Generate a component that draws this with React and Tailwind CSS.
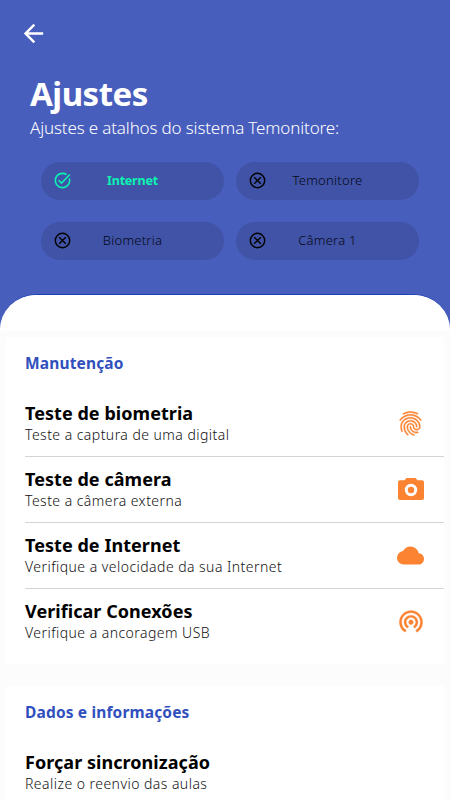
import { MdArrowBack, MdTaskAlt, MdFingerprint, MdCloud, MdWifiTethering } from "react-icons/md";

const devices = [
  { name: "Internet", online: true },
  { name: "Temonitore", online: false },
  { name: "Biometria", online: false },
  { name: "Câmera 1", online: false },
];

const maintenance = [
  {
    title: "Teste de biometria",
    text: "Teste a captura de uma digital",
    icon: <MdFingerprint size={29} className="[&>path]:stroke-current [&>path]:[stroke-width:0.35] [&>path[fill=none]]:hidden" />,
  },
  { title: "Teste de câmera", text: "Teste a câmera externa", icon: <CameraIcon /> },
  { title: "Teste de Internet", text: "Verifique a velocidade da sua Internet", icon: <MdCloud size={27} /> },
  {
    title: "Verificar Conexões",
    text: "Verifique a ancoragem USB",
    icon: <MdWifiTethering size={28} className="-mt-0.5 [&>path]:stroke-current [&>path]:[stroke-width:0.2] [&>path[fill=none]]:hidden" />,
  },
];

const data = [{ title: "Forçar sincronização", text: "Realize o reenvio das aulas" }];

function CameraIcon() {
  return (
    <svg className="-mt-px" width="26" height="22" viewBox="0 0 26 22" fill="currentColor">
      <path d="M8.5 0h9l2 2.2H24a2 2 0 0 1 2 2V20a2 2 0 0 1-2 2H2a2 2 0 0 1-2-2V4.2a2 2 0 0 1 2-2h4.500z" />
      <circle cx="13" cy="12" r="4.7" fill="none" stroke="white" strokeWidth="3" />
    </svg>
  );
}

function OfflineIcon() {
  return (
    <svg className="-mt-0.5 shrink-0 text-black" width="19" height="19" viewBox="0 0 19 19" fill="none" stroke="currentColor" strokeWidth="1.4">
      <circle cx="9.5" cy="9.5" r="7.2" />
      <path d="M6.2 6.2l6.6 6.6M12.8 6.2l-6.6 6.6" />
    </svg>
  );
}

function StatusPill({ name, online }) {
  return (
    <div className={`flex h-[38px] items-center rounded-full bg-[#4053a6] pl-3 ${online ? "text-[#0bf5b2]" : "text-[#050818]"}`}>
      {online ? <MdTaskAlt size={19} className="-mt-0.5 shrink-0" /> : <OfflineIcon />}
      <span className={`flex-1 pr-[31px] text-center leading-[38px] ${online ? "text-[12.5px] font-bold tracking-[-0.2px]" : "-mt-0.5 text-[13px] font-light tracking-[0.25px]"}`}>
        {name}
      </span>
    </div>
  );
}

function Row({ title, text, icon }) {
  return (
    <li className="flex h-[66px] items-center border-b border-[#d4d4d4] last:border-transparent">
      <div className="flex-1">
        <h3 className="text-[18px] leading-5 font-bold tracking-[0.05px] text-black">{title}</h3>
        <p className="mt-0.5 text-[14px] leading-5 font-light tracking-[0.46px] text-[#111]">{text}</p>
      </div>
      {icon && <div className="mr-[13.5px] flex w-10 justify-center text-[#fb8332]">{icon}</div>}
    </li>
  );
}

function Section({ title, items }) {
  return (
    <section className="mx-1.5 h-[327px] shrink-0 bg-white pt-[14px] pl-[19px]">
      <h2 className="text-[15.5px] leading-6 font-bold tracking-[0.15px] text-[#3150bd]">{title}</h2>
      <ul className="mt-4">
        {items.map((item) => (
          <Row key={item.title} {...item} />
        ))}
      </ul>
    </section>
  );
}

export default function App() {
  return (
    <div className="flex h-[800px] w-[450px] flex-col overflow-hidden bg-[#485ebd] font-['Noto_Sans',sans-serif]">
      <header className="h-[294px] shrink-0 pt-[19px]">
        <button className="ml-[19px] block text-white">
          <MdArrowBack size={29} />
        </button>
        <h1 className="mt-[23px] ml-[30px] text-[33px] leading-[46px] font-bold tracking-[-0.5px] text-white">Ajustes</h1>
        <p className="-mt-px ml-[30px] text-[17px] leading-6 font-light tracking-[-0.15px] whitespace-nowrap text-white">
          Ajustes e atalhos do sistema Temonitore:
        </p>
        <div className="mt-[22px] grid grid-cols-[183px_183px] gap-x-3 gap-y-[22px] pl-[41px]">
          {devices.map((d) => (
            <StatusPill key={d.name} {...d} />
          ))}
        </div>
      </header>
      <main className="flex-1 overflow-hidden rounded-t-[36px] border-t border-[#1d41b8] bg-[#fcfcfc]">
        <div className="h-9 bg-white" />
        <div className="flex flex-col gap-[22px] pt-1.5">
          <Section title="Manutenção" items={maintenance} />
          <Section title="Dados e informações" items={data} />
        </div>
      </main>
    </div>
  );
}
